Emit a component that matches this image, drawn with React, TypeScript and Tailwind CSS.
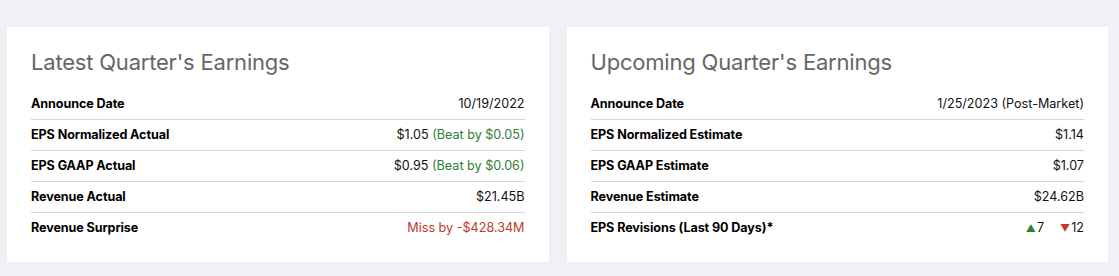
import type { ReactNode } from 'react'

type Row = { label: string; value: ReactNode }

const latest: Row[] = [
  { label: 'Announce Date', value: '10/19/2022' },
  { label: 'EPS Normalized Actual', value: <>$1.05 <span className="text-[#2e7d32]">(Beat by $0.05)</span></> },
  { label: 'EPS GAAP Actual', value: <>$0.95 <span className="text-[#2e7d32]">(Beat by $0.06)</span></> },
  { label: 'Revenue Actual', value: '$21.45B' },
  { label: 'Revenue Surprise', value: <span className="text-[#c0392b]">Miss by -$428.34M</span> },
]

const upcoming: Row[] = [
  { label: 'Announce Date', value: '1/25/2023 (Post-Market)' },
  { label: 'EPS Normalized Estimate', value: '$1.14' },
  { label: 'EPS GAAP Estimate', value: '$1.07' },
  { label: 'Revenue Estimate', value: '$24.62B' },
  {
    label: 'EPS Revisions (Last 90 Days)*',
    value: (
      <span className="flex items-center">
        <span className="text-[10px] text-[#2e7d32] mr-[1px]">▲</span>7
        <span className="text-[10px] text-[#c0392b] ml-[16px] mr-[1px]">▼</span>12
      </span>
    ),
  },
]

function Card({ title, rows }: { title: string; rows: Row[] }) {
  return (
    <div className="flex-1 bg-white px-6 pt-[20px] h-[235px]">
      <h2 className="text-[22px] text-[#666] leading-[30px] tracking-[-0.2px] mb-[12px]">{title}</h2>
      <div>
        {rows.map((r, i) => (
          <div
            key={r.label}
            className={`flex items-center justify-between h-[31px] text-[12.6px] ${i < rows.length - 1 ? 'border-b border-[#d6d6d6]' : ''}`}
          >
            <span className="font-bold text-black tracking-[-0.1px]">{r.label}</span>
            <span className="text-[#111]">{r.value}</span>
          </div>
        ))}
      </div>
    </div>
  )
}

export default function App() {
  return (
    <div className="w-[1119px] h-[276px] bg-[#f0f1f5] flex gap-[18px] pl-[7px] pr-[11px] pt-[27px]" style={{ fontFamily: 'Inter, "Noto Sans", sans-serif' }}>
      <Card title="Latest Quarter's Earnings" rows={latest} />
      <Card title="Upcoming Quarter's Earnings" rows={upcoming} />
    </div>
  )
}
